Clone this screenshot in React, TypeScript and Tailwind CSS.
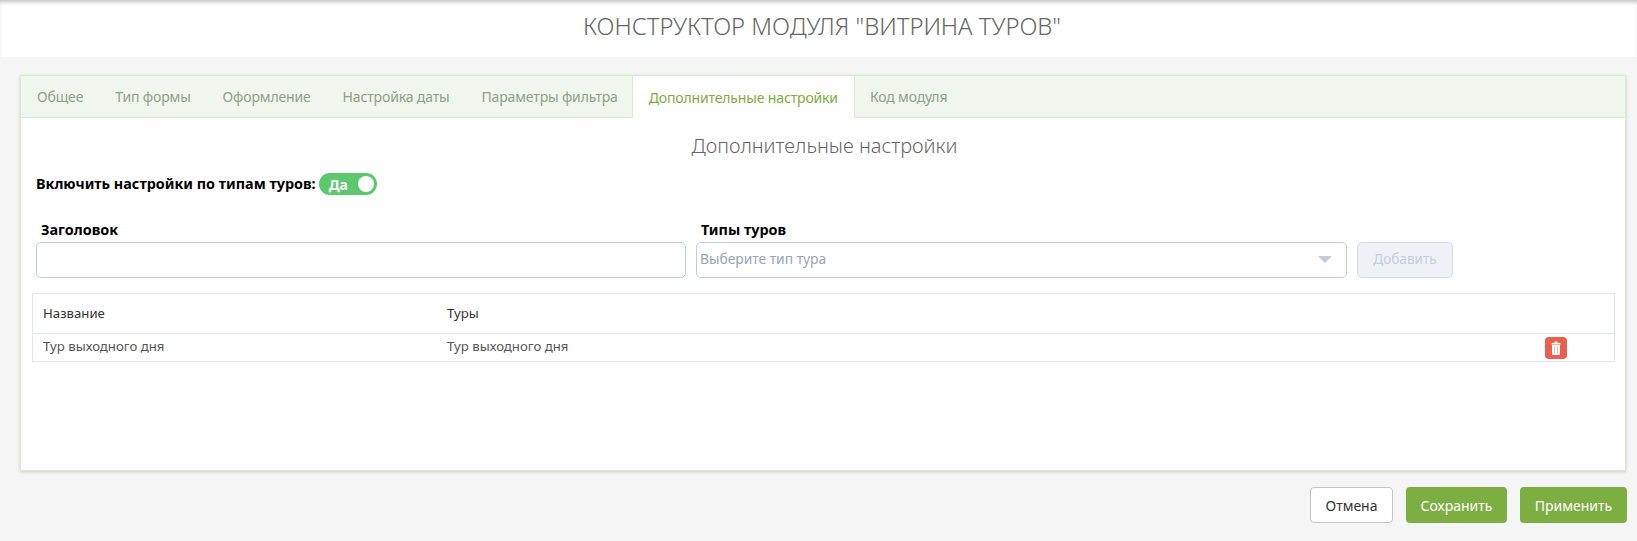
import React from 'react';

const font = { fontFamily: '"Noto Sans", sans-serif' };

const tabs = ['Общее', 'Тип формы', 'Оформление', 'Настройка даты', 'Параметры фильтра', 'Дополнительные настройки', 'Код модуля'];
const activeTab = 'Дополнительные настройки';

const TrashIcon = () => (
  <svg width="10" height="14" viewBox="0 0 10 14">
    <path d="M3.5 0.5h3v1.5h-3z" fill="#ffffff" />
    <path d="M0.5 2h9v1.5h-9z" fill="#ffffff" />
    <path d="M1 4h8v9a1 1 0 0 1-1 1H2a1 1 0 0 1-1-1z" fill="#ffffff" />
    <path d="M3 5.5h1v7H3zM6 5.5h1v7H6z" fill="#f5b5ae" />
  </svg>
);

export default function App() {
  return (
    <div className="h-[541px] w-[1637px] overflow-hidden bg-[#f5f5f5] text-[14px] text-[#333]" style={font}>
      {/* Header */}
      <div className="flex h-[57px] items-center justify-center bg-white pb-[3px] pl-[7px] shadow-[inset_0_4px_4px_-2px_rgba(0,0,0,0.25)]">
        <h1 className="text-[23.8px] font-light text-[#666]">КОНСТРУКТОР МОДУЛЯ "ВИТРИНА ТУРОВ"</h1>
      </div>

      {/* Card */}
      <div className="ml-5 mr-[11px] mt-[18px] h-[396px] border border-[#dde6d8] bg-white shadow-[0_1px_3px_rgba(120,140,100,0.35)]">
        <div className="flex h-[42px] border-b border-[#dde6d8] bg-[#f0f5ee]">
          {tabs.map((tab) => (
            <div
              key={tab}
              className={
                tab === activeTab
                  ? '-ml-[2px] -mr-px flex h-[42px] items-center border-x border-[#dde6d8] bg-white px-4 tracking-[-0.15px] text-[#7cae3f]'
                  : 'flex items-center px-4 tracking-[-0.15px] text-[#8fa088]'
              }
            >
              {tab}
            </div>
          ))}
        </div>

        <h2 className="mt-[13px] pl-[3px] text-center text-[20px] font-light text-[#666]">Дополнительные настройки</h2>

        <div className="mt-[11px] flex items-center gap-[3px] pl-[15px]">
          <span className="text-[14.4px] font-bold text-black">Включить настройки по типам туров:</span>
          <div className="mt-[1px] flex h-[22px] w-[58px] items-center justify-between rounded-full bg-[#5cc96e] pl-[10px] pr-[3px]">
            <span className="text-[14px] font-bold text-white">Да</span>
            <div className="h-4 w-4 rounded-full bg-white" />
          </div>
        </div>

        {/* Form */}
        <div className="mt-[24px] flex items-end pl-[15px]">
          <div className="w-[650px]">
            <div className="mb-[1px] pl-[5px] text-[14.4px] font-bold text-black">Заголовок</div>
            <div className="h-9 rounded-[5px] border border-[#c3cbdc] bg-white" />
          </div>
          <div className="ml-[10px] w-[651px]">
            <div className="mb-[1px] pl-[5px] text-[14.4px] font-bold text-black">Типы туров</div>
            <div className="flex h-9 items-center justify-between rounded-[5px] border border-[#c3cbdc] bg-white pl-[3px] pr-[14px] text-[13.8px] text-[#9aa3b8]">
              <span>Выберите тип тура</span>
              <div className="h-0 w-0 border-x-[7px] border-t-[7px] border-x-transparent border-t-[#c3cbdc]" />
            </div>
          </div>
          <button className="ml-[10px] h-9 w-[96px] rounded-[5px] border border-[#d5dbe6] bg-[#eff1f6] text-[13.6px] text-[#c5ccdc]">Добавить</button>
        </div>

        {/* Table */}
        <div className="ml-[11px] mr-[10px] mt-[15px] border border-[#e2e5ec] text-[13.2px]">
          <div className="flex h-[40px] items-center border-b border-[#e2e5ec] pt-[2px] text-[#333]">
            <div className="w-[414px] pl-[10px]">Название</div>
            <div>Туры</div>
          </div>
          <div className="flex h-[27px] items-center text-[#555]">
            <div className="w-[414px] pl-[10px]">Тур выходного дня</div>
            <div className="flex-1">Тур выходного дня</div>
            <button className="mr-[47px] mt-[1px] flex h-[22px] w-[22px] items-center justify-center rounded-[4px] bg-[#ec5f4f]">
              <TrashIcon />
            </button>
          </div>
        </div>
      </div>

      {/* Footer buttons */}
      <div className="mr-[10px] mt-4 flex justify-end gap-[13px]">
        <button className="h-9 w-[83px] rounded-[4px] border border-[#c4c4c4] bg-white text-[#333]">Отмена</button>
        <button className="h-9 w-[101px] rounded-[4px] bg-[#7cae41] text-white">Сохранить</button>
        <button className="h-9 w-[107px] rounded-[4px] bg-[#7cae41] text-white">Применить</button>
      </div>
    </div>
  );
}
